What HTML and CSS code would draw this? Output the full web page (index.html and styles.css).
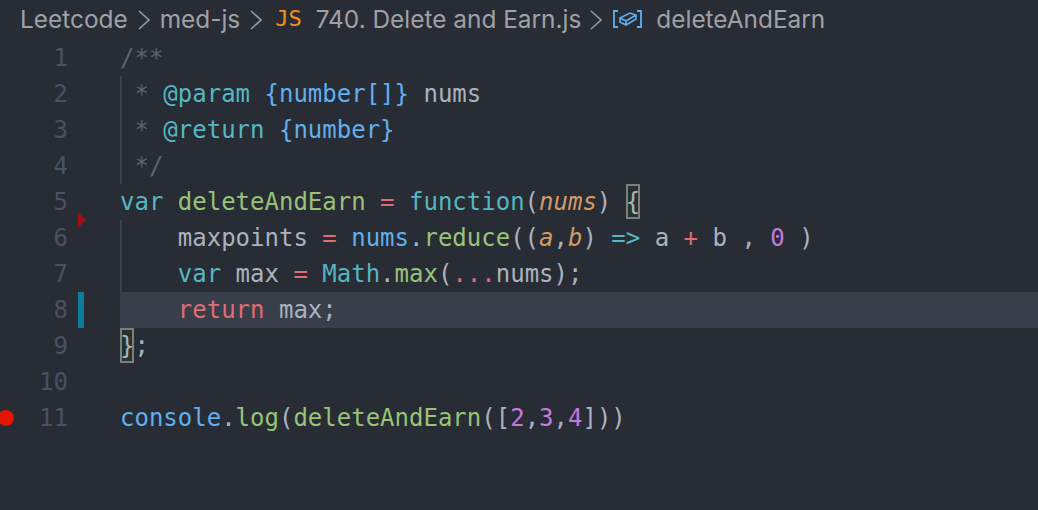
FILE: index.html
```html
<!DOCTYPE html>
<html lang="en">
<head>
<meta charset="utf-8">
<title>740. Delete and Earn.js</title>
<link rel="stylesheet" href="styles.css">
</head>
<body>
<nav class="crumbs">
  <span>Leetcode</span>
  <svg class="chev" viewBox="0 0 12 20"><path d="M1 1l10 9-10 9"/></svg>
  <span>med-js</span>
  <svg class="chev" viewBox="0 0 12 20"><path d="M1 1l10 9-10 9"/></svg>
  <span class="js">JS</span>
  <span class="file">740. Delete and Earn.js</span>
  <svg class="chev last" viewBox="0 0 12 20"><path d="M1 1l10 9-10 9"/></svg>
  <svg class="sym" viewBox="0 0 29 18"><path class="br" d="M5 1H1v16h4M24 1h4v16h-4"/><path d="M7 8l10-5 6 2v4l-10 6-6-3zM7 8l6 3 10-6M13 11v4"/></svg>
  <span class="fn">deleteAndEarn</span>
</nav>
<main class="editor">
  <div class="row"><div class="gutter"><span class="bp"></span><span class="num">1</span><span class="mark"></span></div><div class="code"><i class="cm">/**</i></div></div>
  <div class="row"><div class="gutter"><span class="bp"></span><span class="num">2</span><span class="mark"></span></div><div class="code guide"><span class="cm"> * </span><span class="tag">@param</span> <span class="blue">{number[]}</span> <span class="txt">nums</span></div></div>
  <div class="row"><div class="gutter"><span class="bp"></span><span class="num">3</span><span class="mark"></span></div><div class="code guide"><span class="cm"> * </span><span class="tag">@return</span> <span class="blue">{number}</span></div></div>
  <div class="row"><div class="gutter"><span class="bp"></span><span class="num">4</span><span class="mark"></span></div><div class="code guide"><span class="cm"> */</span></div></div>
  <div class="row"><div class="gutter"><span class="bp"></span><span class="num">5</span><span class="mark"></span></div><div class="code"><span class="kw">var</span> <span class="grn">deleteAndEarn</span> <span class="red">=</span> <span class="kw">function</span><span class="txt">(</span><em class="org">nums</em><span class="txt">)</span> <span class="match txt">{</span></div></div>
  <div class="row"><div class="gutter"><span class="bp"></span><span class="num">6</span><span class="mark"><span class="tri"></span></span></div><div class="code guide"><span class="txt">    maxpoints </span><span class="red">=</span> <span class="blue">nums</span><span class="txt">.</span><span class="grn">reduce</span><span class="txt">((</span><em class="org">a</em><span class="txt">,</span><em class="org">b</em><span class="txt">)</span> <span class="kw">=&gt;</span> <span class="txt">a</span> <span class="red">+</span> <span class="txt">b ,</span> <span class="pur">0</span> <span class="txt">)</span></div></div>
  <div class="row"><div class="gutter"><span class="bp"></span><span class="num">7</span><span class="mark"></span></div><div class="code guide">    <span class="kw">var</span> <span class="txt">max </span><span class="red">=</span> <span class="kw">Math</span><span class="txt">.</span><span class="grn">max</span><span class="txt">(</span><span class="red">...</span><span class="txt">nums);</span></div></div>
  <div class="row"><div class="gutter"><span class="bp"></span><span class="num">8</span><span class="mark"><span class="change"></span></span></div><div class="code guide active">    <span class="red">return</span> <span class="txt">max;</span></div></div>
  <div class="row"><div class="gutter"><span class="bp"></span><span class="num">9</span><span class="mark"></span></div><div class="code"><span class="match txt">}</span><span class="txt">;</span></div></div>
  <div class="row"><div class="gutter"><span class="bp"></span><span class="num">10</span><span class="mark"></span></div><div class="code"></div></div>
  <div class="row"><div class="gutter"><span class="bp on"></span><span class="num">11</span><span class="mark"></span></div><div class="code"><span class="blue">console</span><span class="txt">.</span><span class="grn">log</span><span class="txt">(</span><span class="grn">deleteAndEarn</span><span class="txt">([</span><span class="pur">2</span><span class="txt">,</span><span class="pur">3</span><span class="txt">,</span><span class="pur">4</span><span class="txt">]))</span></div></div>
</main>
</body>
</html>
```
FILE: styles.css
```css
* { box-sizing: border-box; }
html, body { height: 100%; }
body {
  margin: 0;
  background: #282c34;
  overflow: hidden;
}
.crumbs {
  display: flex;
  align-items: center;
  height: 40px;
  padding: 0 0 2px 20px;
  font: 24.4px/38px Inter, "Liberation Sans", sans-serif;
  color: #a0a1a7;
  white-space: nowrap;
}
.chev {
  width: 12px;
  height: 20px;
  margin: 2px 10px 0 10px;
  fill: none;
  stroke: #9a9ba1;
  stroke-width: 1.6;
}
.chev.last { margin: 2px 9px 0 9px; }
.js {
  color: #f78c1f;
  font: 22px/38px "DejaVu Sans Mono", monospace;
  margin: 0 14px 0 3px;
}
.sym {
  width: 29px;
  height: 18px;
  margin: 0 14px 0 2px;
  fill: none;
  stroke: #61aeee;
  stroke-width: 1.6;
}
.br { stroke-width: 1.8; }
.editor { display: flex; flex-direction: column; }
.row { display: flex; height: 36px; }
.gutter { display: flex; width: 120px; flex: none; align-items: center; }
.bp {
  width: 16px;
  height: 16px;
  margin-left: -2px;
  border-radius: 50%;
  flex: none;
}
.bp.on { background: #e51400; }
.num {
  width: 54px;
  text-align: right;
  flex: none;
  font: 24px/36px "DejaVu Sans Mono", monospace;
  color: #495162;
}
.mark {
  position: relative;
  width: 6px;
  height: 36px;
  margin-left: 10px;
  flex: none;
}
.change {
  display: block;
  width: 6px;
  height: 36px;
  background: #0c7d9d;
}
.tri {
  position: absolute;
  left: 0;
  top: -8px;
  width: 0;
  height: 0;
  border-left: 8px solid #9b1111;
  border-top: 8px solid transparent;
  border-bottom: 8px solid transparent;
}
.code {
  flex: 1;
  height: 36px;
  font: 24px/36px "DejaVu Sans Mono", monospace;
  white-space: pre;
  color: #abb2bf;
}
.guide { box-shadow: inset 2px 0 0 #3b4048; }
.active { background: #383e4a; }
.cm { font-style: normal; color: #5c6370; }
.tag { color: #56b6c2; }
.blue { color: #61afef; }
.txt { color: #abb2bf; }
.kw { color: #56b6c2; }
.grn { color: #98c379; }
.red { color: #e06c75; }
.pur { color: #c678dd; }
.org { color: #d19a66; font-style: italic; }
.match {
  display: inline-block;
  height: 35px;
  vertical-align: top;
  background: #25352e;
  outline: 2px solid #7d7f80;
  outline-offset: -2px;
}
```
